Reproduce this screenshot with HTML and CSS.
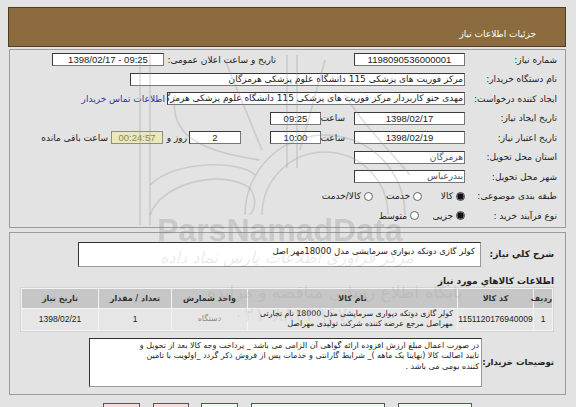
FILE: index.html
```html
<!DOCTYPE html>
<html lang="fa" dir="rtl">
<head>
<meta charset="utf-8">
<link rel="stylesheet" href="styles.css">
</head>
<body>
<div class="page">
  <div class="hdr"><span class="hdr-text">جزئیات اطلاعات نیاز</span></div>

  <div class="panel info">
    <div class="row">
      <span class="lbl">شماره نیاز:</span>
      <span class="box w111 num">1198090536000001</span>
      <span class="lbl2">تاریخ و ساعت اعلان عمومی:</span>
      <span class="box w112 num">1398/02/17 - 09:25</span>
    </div>
    <div class="row">
      <span class="lbl">نام دستگاه خریدار:</span>
      <span class="box w335 txt">مرکز فوریت های پزشکی 115 دانشگاه علوم پزشکی هرمزگان</span>
    </div>
    <div class="row">
      <span class="lbl">ایجاد کننده درخواست:</span>
      <span class="box w298 txt">مهدی حنو کاربردار مرکز فوریت های پزشکی 115 دانشگاه علوم پزشکی هرمزگان</span>
      <a class="link" href="#">اطلاعات تماس خریدار</a>
    </div>
    <div class="row">
      <span class="lbl">تاریخ ایجاد نیاز:</span>
      <span class="box w111 num">1398/02/17</span>
      <span class="hour">ساعت</span>
      <span class="box w51 num">09:25</span>
    </div>
    <div class="row">
      <span class="lbl">تاریخ اعتبار نیاز:</span>
      <span class="box w111 num">1398/02/19</span>
      <span class="hour">ساعت</span>
      <span class="box w51 num">10:00</span>
      <span class="box w52 num days">2</span>
      <span class="roz">روز و</span>
      <span class="box w52 num timer">00:24:57</span>
      <span class="remain">ساعت باقی مانده</span>
    </div>
    <div class="row">
      <span class="lbl">استان محل تحویل:</span>
      <span class="box w111 txt soft">هرمزگان</span>
    </div>
    <div class="row">
      <span class="lbl">شهر محل تحویل:</span>
      <span class="box w111 txt soft">بندرعباس</span>
    </div>
    <div class="row">
      <span class="lbl">طبقه بندی موضوعی:</span>
      <span class="choice c43"><span class="radio on"></span><span class="opt">کالا</span></span>
      <span class="choice c49"><span class="radio"></span><span class="opt">خدمت</span></span>
      <span class="choice"><span class="radio"></span><span class="opt">کالا/خدمت</span></span>
    </div>
    <div class="row">
      <span class="lbl">نوع فرآیند خرید :</span>
      <span class="choice c46"><span class="radio on"></span><span class="opt">جزیی</span></span>
      <span class="choice"><span class="radio"></span><span class="opt">متوسط</span></span>
    </div>
  </div>

  <div class="panel goods">
    <div class="descrow">
      <span class="blbl dlbl">شرح کلي نياز:</span>
      <div class="descbox">کولر گازی دوتکه دیواری سرمایشی مدل 18000مهر اصل</div>
    </div>
    <div class="section">اطلاعات کالاهاي مورد نياز</div>
    <div class="tablewrap">
      <table class="items">
        <thead>
          <tr>
            <th class="c-rad">ردیف</th>
            <th class="c-code">کد کالا</th>
            <th class="c-name">نام کالا</th>
            <th class="c-unit">واحد شمارش</th>
            <th class="c-qty">تعداد / مقدار</th>
            <th class="c-date">تاریخ نیاز</th>
          </tr>
        </thead>
        <tbody>
          <tr>
            <td class="c-rad n">1</td>
            <td class="c-code n">1151120176940009</td>
            <td class="c-name nm">کولر گازی دوتکه دیواری سرمایشی مدل 18000 نام تجارتی<br>مهراصل مرجع عرضه کننده شرکت تولیدی مهراصل</td>
            <td class="c-unit unit">دستگاه</td>
            <td class="c-qty n">1</td>
            <td class="c-date n">1398/02/21</td>
          </tr>
        </tbody>
      </table>
    </div>
    <div class="noterow">
      <span class="blbl nlbl">توضیحات خریدار:</span>
      <div class="notebox">در صورت اعمال مبلغ ارزش افزوده ارائه گواهی آن الزامی می باشد _ پرداخت وجه کالا بعد از تحویل و<br>تایید اصالت کالا (نهایتا یک ماهه )_ شرایط گارانتی و خدمات پس از فروش ذکر گردد _اولویت با تامین<br>کننده بومی می باشد .</div>
    </div>
  </div>

  <div class="buttons">
    <span class="btn pink w37"></span>
    <span class="btn pink w36"></span>
    <span class="btn green w37 g12"></span>
    <span class="btn green w134"></span>
    <span class="btn green w74"></span>
  </div>

  <svg class="logo" width="576" height="407" viewBox="0 0 576 407" aria-hidden="true">
    <g fill="none" stroke="rgba(140,140,140,0.28)" stroke-width="1.6">
      <path d="M140 55 V225 M150 55 V225"/>
      <path d="M287 55 V168 M297 55 V168"/>
      <path d="M150 185 C175 160 240 160 255 175"/>
      <path d="M150 215 C160 185 215 170 245 185 C255 190 258 205 250 215"/>
      <path d="M245 215 A80 80 0 0 1 405 215"/>
      <path d="M262 215 A62 62 0 0 1 388 215"/>
      <path d="M175 95 C170 130 190 150 260 160"/>
      <path d="M225 60 L262 150 M325 60 L300 150"/>
      <path d="M345 95 C360 120 380 140 410 175"/>
    </g>
  </svg>
  <div class="wm wm1">ParsNamadData</div>
  <div class="wm wm2">مرکز فراوری اطلاعات پارس نماد داده</div>
  <div class="wm wm3">پایگاه اطلاع رسانی مناقصه و مزایده</div>
  <div class="wm wm4">۰۲۱-۸۸۳۴۹۶۷۰</div>
</div>
</body>
</html>
```

FILE: styles.css
```css
body {
  margin: 0;
  padding: 0;
  background: #e3e3e3;
  font-family: "DejaVu Sans", "Liberation Sans", sans-serif;
  font-size: 9px;
  color: #222;
}
.page {
  position: relative;
  direction: rtl;
  width: 576px;
  height: 400px;
  padding-top: 7px;
  overflow: clip;
}
.hdr {
  box-sizing: border-box;
  margin: 0 10px 0 8px;
  height: 40px;
  background: #8c6b3e;
  border: 1px solid #4c3d29;
  padding: 21px 29px 0 0;
  text-align: right;
}
.hdr-text {
  color: #ffffff;
  font-size: 9px;
  line-height: 11px;
}

.panel {
  box-sizing: border-box;
  border: 1px solid #9c9c9c;
  margin: 2px 10px 0 9px;
}
.info {
  padding: 0 8px 1px 0;
}
.row {
  display: flex;
  align-items: center;
  height: 19.5px;
  white-space: nowrap;
}
.lbl {
  width: 92px;
  flex: none;
}
.box {
  flex: none;
  box-sizing: border-box;
  height: 13px;
  line-height: 11px;
  background: #fff;
  border: 1px solid #777;
  border-top-color: #3a3a3a;
  border-left-color: #3a3a3a;
  overflow: hidden;
  white-space: nowrap;
}
.num {
  direction: ltr;
  text-align: center;
  font-family: "Liberation Sans", sans-serif;
  font-size: 9.5px;
}
.txt {
  text-align: right;
  padding-right: 1px;
}
.soft { color: #555; }
.w111 { width: 111px; }
.w112 { width: 112px; }
.w335 { width: 335px; }
.w298 { width: 298px; }
.w51 { width: 51px; }
.w52 { width: 52px; }
.lbl2 {
  margin-right: 78px;
  width: 112px;
  flex: none;
}
.link {
  margin-right: 2px;
  color: #2f33a8;
  text-decoration: none;
}
.hour {
  margin-right: 9px;
  width: 22px;
  flex: none;
}
.hour + .box { margin-right: 2px; }
.days { margin-right: 29px; }
.roz { margin-right: 2px; width: 19px; flex: none; }
.timer {
  margin-right: 5px;
  background: #ebe8bc;
  color: #8a8a62;
  border-color: #8d8d8d;
}
.remain { margin-right: 3px; }

.choice {
  display: flex;
  align-items: center;
  flex: none;
}
.c43 { width: 43px; }
.c49 { width: 49px; }
.c46 { width: 46px; }
.radio {
  flex: none;
  box-sizing: border-box;
  width: 9px;
  height: 9px;
  border-radius: 50%;
  border: 1px solid #666;
  background: #fff;
}
.radio.on {
  background: radial-gradient(circle, #111 0 2.8px, #9a9a9a 3.3px);
  border-color: #444;
}
.opt { margin-right: 3px; }

.goods {
  margin-top: 4px;
  padding: 9px 11px 7px 10px;
}
.descrow {
  display: flex;
  align-items: center;
}
.blbl {
  font-weight: bold;
  flex: none;
  white-space: nowrap;
}
.dlbl { width: 73px; }
.descbox {
  box-sizing: border-box;
  width: 403px;
  height: 25px;
  background: #fff;
  border: 1px solid #333;
  border-right-color: #999;
  border-bottom-color: #999;
  padding: 3px 5px 0 0;
  font-size: 8.5px;
  text-align: right;
}
.section {
  font-weight: bold;
  margin-top: 8px;
  height: 12px;
  line-height: 12px;
}
.tablewrap {
  border: 1px solid #d2d2d2;
  background: #f3f3f3;
  width: 534px;
  box-sizing: border-box;
}
.items {
  border-collapse: separate;
  border-spacing: 1px;
  width: 532px;
  table-layout: fixed;
}
.items th {
  background: #c6c6c6;
  height: 19px;
  padding: 0;
  font-size: 8px;
  font-weight: bold;
  color: #333;
}
.items td {
  background: #e6e6e6;
  height: 21px;
  padding: 0;
  text-align: center;
  font-size: 8px;
  line-height: 10px;
}
.items td.nm {
  text-align: right;
  padding-right: 4px;
  font-size: 7.8px;
  white-space: nowrap;
  overflow: hidden;
}
.items td.n {
  font-family: "Liberation Sans", sans-serif;
  font-size: 8.5px;
}
.items td.unit { color: #8a8a8a; }
.c-rad { width: 18px; }
.c-code { width: 75px; }
.c-name { width: 209px; }
.c-unit { width: 75px; }
.c-qty { width: 72px; }
.c-date { width: 76px; }

.noterow {
  display: flex;
  align-items: center;
  margin-top: 6px;
}
.nlbl { width: 72px; font-size: 8.5px; }
.notebox {
  box-sizing: border-box;
  width: 393px;
  height: 49px;
  background: #fff;
  border: 1px solid #333;
  border-right-color: #999;
  border-bottom-color: #999;
  padding: 2px 2px 0 0;
  font-size: 8px;
  line-height: 10.5px;
  text-align: right;
  white-space: nowrap;
  overflow: hidden;
}

.buttons {
  display: flex;
  direction: ltr;
  margin-top: 8px;
  padding-left: 103px;
  gap: 13px;
}
.btn {
  box-sizing: border-box;
  height: 12px;
  border: 1px solid #555;
  flex: none;
}
.pink { background: #f8dcdc; }
.green { background: #effbef; }
.w37 { width: 37px; }
.w36 { width: 36px; }
.w134 { width: 134px; }
.w74 { width: 74px; }
.g12 { margin-left: -1px; }

.logo {
  position: absolute;
  left: 0;
  top: 0;
  pointer-events: none;
}
.wm {
  position: absolute;
  pointer-events: none;
  white-space: nowrap;
}
.wm1 {
  left: 157px;
  top: 214px;
  font-family: "Liberation Sans", sans-serif;
  font-weight: bold;
  font-size: 32px;
  line-height: 32px;
  direction: ltr;
  color: rgba(110, 110, 110, 0.24);
}
.wm2 {
  left: 160px;
  top: 248px;
  font-size: 16px;
  line-height: 20px;
  font-style: italic;
  color: rgba(120, 120, 120, 0.16);
}
.wm3 {
  left: 207px;
  top: 282px;
  font-size: 17px;
  line-height: 20px;
  color: rgba(120, 120, 120, 0.15);
}
.wm4 {
  left: 233px;
  top: 302px;
  font-size: 20px;
  line-height: 24px;
  direction: ltr;
  color: rgba(120, 120, 120, 0.13);
}
```
